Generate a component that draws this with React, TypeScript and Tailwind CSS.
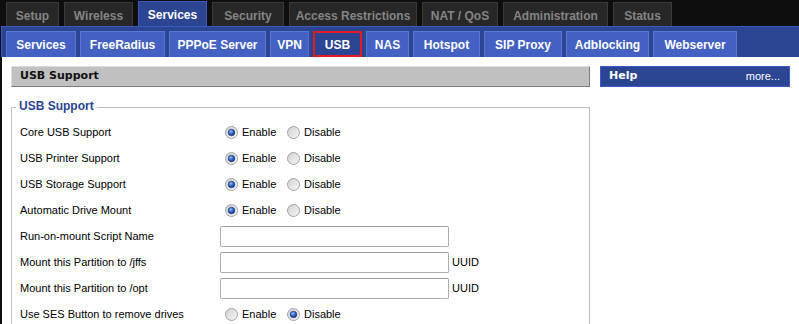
import React from "react";

const topTabs = [
  { label: "Setup", w: "w-[53px]" },
  { label: "Wireless", w: "w-[69px]" },
  { label: "Services", w: "w-[69px]", active: true },
  { label: "Security", w: "w-[72px]" },
  { label: "Access Restrictions", w: "w-[128px]" },
  { label: "NAT / QoS", w: "w-[76px]" },
  { label: "Administration", w: "w-[105px]" },
  { label: "Status", w: "w-[59px]" },
];

const subTabs = [
  { label: "Services", w: "w-[70px]" },
  { label: "FreeRadius", w: "w-[85px]" },
  { label: "PPPoE Server", w: "w-[97px]" },
  { label: "VPN", w: "w-[39px]" },
  { label: "USB", w: "w-[49px]", active: true },
  { label: "NAS", w: "w-[43px]" },
  { label: "Hotspot", w: "w-[67px]" },
  { label: "SIP Proxy", w: "w-[78px]" },
  { label: "Adblocking", w: "w-[83px]" },
  { label: "Webserver", w: "w-[84px]" },
];

function Radio({ checked }: { checked?: boolean }) {
  return (
    <svg width="13" height="13" viewBox="0 0 13 13" className="shrink-0">
      <defs>
        <linearGradient id="rbg" x1="0" y1="0" x2="1" y2="1">
          <stop offset="0" stopColor="#cfcfcf" />
          <stop offset="1" stopColor="#f7f7f7" />
        </linearGradient>
        <radialGradient id="rdot" cx="0.4" cy="0.35" r="0.7">
          <stop offset="0" stopColor="#9cc4ff" />
          <stop offset="0.5" stopColor="#2f63d0" />
          <stop offset="1" stopColor="#13307a" />
        </radialGradient>
      </defs>
      <circle cx="6.5" cy="6.5" r="6" fill="url(#rbg)" stroke="#9ea3a8" strokeWidth="1" />
      {checked ? <circle cx="6.5" cy="6.5" r="3.3" fill="url(#rdot)" stroke="#1a2f66" strokeWidth="0.6" /> : null}
    </svg>
  );
}

function RadioPair({ enabled }: { enabled: boolean }) {
  return (
    <div className="flex items-center pl-[5px]">
      <Radio checked={enabled} />
      <span className="ml-[4px] w-[45px]">Enable</span>
      <Radio checked={!enabled} />
      <span className="ml-[4px]">Disable</span>
    </div>
  );
}

function Row({ label, children }: { label: string; children: React.ReactNode }) {
  return (
    <div className="flex h-[26px] items-center">
      <div className="w-[200px]">{label}</div>
      {children}
    </div>
  );
}

function TextInput({ uuid }: { uuid?: boolean }) {
  return (
    <div className="flex items-center">
      <div className="h-[21px] w-[229px] rounded-[2px] border border-[#abadb3] border-t-[#9ca0a6] bg-white" />
      {uuid ? <span className="ml-[3px]">UUID</span> : null}
    </div>
  );
}

export default function App() {
  return (
    <div className="h-[324px] w-[799px] overflow-hidden bg-[#0e0e0e] font-['Liberation_Sans',Arial,sans-serif]">
      <div className="flex h-[26px] items-end gap-[5px] pl-[6px]">
        {topTabs.map((t) =>
          t.active ? (
            <div
              key={t.label}
              className={`${t.w} flex h-[25px] items-center justify-center border border-b-0 border-[#3d5bbf] bg-[#2c4593] pt-[1px] text-[12px] font-bold text-white`}
            >
              {t.label}
            </div>
          ) : (
            <div
              key={t.label}
              className={`${t.w} flex h-[24px] items-center justify-center border border-b-0 border-[#3a3a3a] bg-[#272727] pt-[2px] text-[12px] font-bold text-[#858585]`}
            >
              {t.label}
            </div>
          )
        )}
      </div>

      <div className="ml-[1px] flex h-[31px] items-end gap-[4px] border-l border-t border-[#3d5bbf] bg-[#2c4593] pl-[4px]">
        {subTabs.map((t) =>
          t.active ? (
            <div
              key={t.label}
              className={`${t.w} flex h-[26px] items-center justify-center border-2 border-[#e31b23] bg-[#2c4593] pt-[1px] text-[12px] font-bold text-white`}
            >
              {t.label}
            </div>
          ) : (
            <div
              key={t.label}
              className={`${t.w} flex h-[26px] items-center justify-center border border-b-0 border-[#5878d8] bg-[#4261c2] pt-[1px] text-[12px] font-bold text-white`}
            >
              {t.label}
            </div>
          )
        )}
      </div>

      <div className="ml-[2px] flex h-[267px] gap-[10px] bg-white pl-[9px] pt-[9px]">
        <div className="w-[579px]">
          <div className="flex h-[21px] items-center border border-[#dcdcdc] border-b-[#7a7a7a] border-r-[#7a7a7a] bg-[#c0c0c0] pl-[8px] font-['DejaVu_Sans',Verdana,sans-serif] text-[11px] font-bold text-[#111]">
            USB Support
          </div>
          <fieldset className="mt-[11px] border border-[#bdbdbd] px-[8px] pt-[3px] text-[11px] text-black">
            <legend className="ml-[-4px] px-[3px] text-[12px] font-bold text-[#2c4593]">
              <span className="relative top-[-1px]">USB Support</span>
            </legend>
            <Row label="Core USB Support">
              <RadioPair enabled />
            </Row>
            <Row label="USB Printer Support">
              <RadioPair enabled />
            </Row>
            <Row label="USB Storage Support">
              <RadioPair enabled />
            </Row>
            <Row label="Automatic Drive Mount">
              <RadioPair enabled />
            </Row>
            <Row label="Run-on-mount Script Name">
              <TextInput />
            </Row>
            <Row label="Mount this Partition to /jffs">
              <TextInput uuid />
            </Row>
            <Row label="Mount this Partition to /opt">
              <TextInput uuid />
            </Row>
            <Row label="Use SES Button to remove drives">
              <RadioPair enabled={false} />
            </Row>
          </fieldset>
        </div>
        <div className="w-[190px]">
          <div className="flex h-[21px] items-center justify-between border border-[#3d5bc6] bg-[#2c4593] pl-[8px] pr-[9px] text-white">
            <span className="font-['DejaVu_Sans',Verdana,sans-serif] text-[11px] font-bold">Help</span>
            <span className="text-[11px]">more...</span>
          </div>
        </div>
      </div>
    </div>
  );
}
